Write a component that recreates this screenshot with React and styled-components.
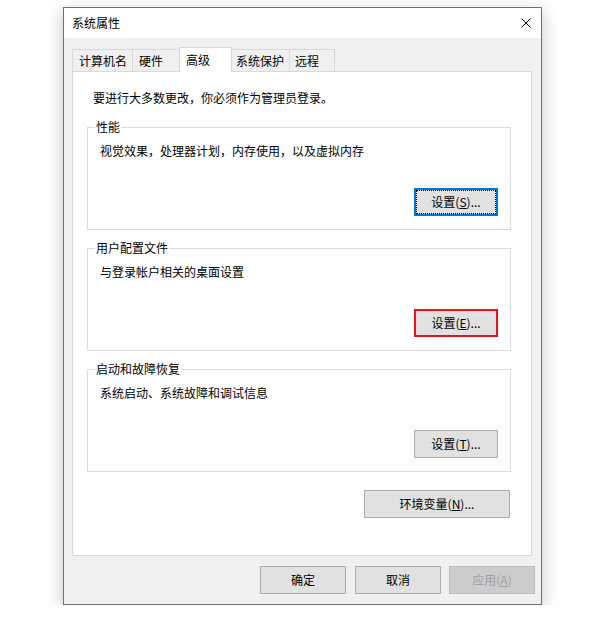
import React from 'react';
import styled, {createGlobalStyle, css} from 'styled-components';

const TABS = [
  {label: '计算机名', width: 61, pad: 6},
  {label: '硬件', width: 48, pad: 6},
  {label: '高级', width: 53, pad: 6, active: true},
  {label: '系统保护', width: 59, pad: 4},
  {label: '远程', width: 46, pad: 5}
];

const GROUPS = [
  {legend: '性能', text: '视觉效果，处理器计划，内存使用，以及虚拟内存', key: 'S', focused: true},
  {legend: '用户配置文件', text: '与登录帐户相关的桌面设置', key: 'E', marked: true},
  {legend: '启动和故障恢复', text: '系统启动、系统故障和调试信息', key: 'T'}
];

const GlobalStyle = createGlobalStyle`
  html, body {
    margin: 0;
    background: #fff;
  }
  body {
    font-family: "Noto Sans CJK SC", "Microsoft YaHei", sans-serif;
    font-size: 12px;
    color: #000;
  }
`;

const Stage = styled.div`
  padding: 7px 0 0 63px;
`;

const Dialog = styled.div`
  box-sizing: border-box;
  width: 479px;
  height: 598px;
  border: 1px solid #707070;
  background: #f0f0f0;
  box-shadow: 0 5px 16px rgba(0, 0, 0, 0.24);
  display: flex;
  flex-direction: column;
`;

const TitleBar = styled.div`
  height: 30px;
  background: #fff;
  display: flex;
  align-items: center;
  justify-content: space-between;
  padding: 0 10px 0 8px;
`;

const Title = styled.span`
  line-height: 16px;
`;

const Body = styled.div`
  flex: 1;
  padding: 9px 6px 10px 8px;
  display: flex;
  flex-direction: column;
`;

const TabStrip = styled.div`
  display: flex;
  align-items: flex-end;
  height: 24px;
`;

const Tab = styled.div`
  box-sizing: border-box;
  width: ${p => p.$width}px;
  height: ${p => (p.$active ? 25 : 22)}px;
  margin-bottom: ${p => (p.$active ? -1 : 0)}px;
  padding: ${p => (p.$active ? 4 : 3)}px 0 0 ${p => p.$pad}px;
  border: 1px solid #d9d9d9;
  border-bottom: none;
  background: ${p => (p.$active ? '#fff' : '#f0f0f0')};
  position: relative;
  z-index: ${p => (p.$active ? 1 : 0)};
  line-height: 16px;
  white-space: nowrap;

  & + & {
    margin-left: -1px;
  }
`;

const Page = styled.div`
  box-sizing: border-box;
  height: 485px;
  margin-right: 3px;
  background: #fff;
  border: 1px solid #d9d9d9;
  padding: 18px 20px 0 14px;
  display: flex;
  flex-direction: column;
`;

const Intro = styled.div`
  margin: 0 0 13px 6px;
  line-height: 16px;
`;

const Group = styled.fieldset`
  margin: 0;
  padding: 8px 12px 13px 7px;
  border: 1px solid #dcdcdc;
  min-width: 0;

  & + & {
    margin-top: 10px;
  }
`;

const Legend = styled.legend`
  padding: 0 1px;
  line-height: 16px;
`;

const GroupText = styled.div`
  margin-left: 5px;
  line-height: 16px;
`;

const Row = styled.div`
  display: flex;
  justify-content: flex-end;
  gap: 8px;
  margin-top: ${p => p.$top}px;
  margin-right: ${p => p.$right || 0}px;
`;

const Button = styled.button`
  box-sizing: border-box;
  width: ${p => p.$width}px;
  height: 28px;
  padding: 0;
  font: inherit;
  font-size: 12px;
  line-height: 16px;
  color: #000;
  background: #e1e1e1;
  border: 1px solid #adadad;
  position: relative;

  ${p => p.$focused && css`
    border: 2px solid #0078d7;

    &::after {
      content: '';
      position: absolute;
      inset: 0;
      border: 1px dotted #000;
    }
  `}

  ${p => p.$marked && css`
    border: 2px solid #f01010;
  `}

  &:disabled {
    background: #cccccc;
    border-color: #bfbfbf;
    color: #a0a0a0;
  }
`;

const Footer = styled(Row)`
  margin-top: 10px;

  & > :first-child {
    margin-right: 1px;
  }
`;

const CloseIcon = () => (
  <svg width="10" height="10" viewBox="0 0 10 10">
    <path d="M0.5 0.5L9.5 9.5M9.5 0.5L0.5 9.5" stroke="#000" strokeWidth="1" fill="none"/>
  </svg>
);

const Label = ({text, hotkey}) => (
  <span>{text}(<u>{hotkey}</u>)</span>
);

export default function App() {
  return (
    <Stage>
      <GlobalStyle/>
      <Dialog>
        <TitleBar>
          <Title>系统属性</Title>
          <CloseIcon/>
        </TitleBar>
        <Body>
          <TabStrip>
            {TABS.map(t => (
              <Tab key={t.label} $width={t.width} $pad={t.pad} $active={t.active}>{t.label}</Tab>
            ))}
          </TabStrip>
          <Page>
            <Intro>要进行大多数更改，你必须作为管理员登录。</Intro>
            {GROUPS.map(g => (
              <Group key={g.legend}>
                <Legend>{g.legend}</Legend>
                <GroupText>{g.text}</GroupText>
                <Row $top={29}>
                  <Button $width={84} $focused={g.focused} $marked={g.marked}>
                    <Label text="设置" hotkey={g.key}/>...
                  </Button>
                </Row>
              </Group>
            ))}
            <Row $top={18} $right={1}>
              <Button $width={146}><Label text="环境变量" hotkey="N"/>...</Button>
            </Row>
          </Page>
          <Footer>
            <Button $width={86}>确定</Button>
            <Button $width={86}>取消</Button>
            <Button $width={86} disabled><Label text="应用" hotkey="A"/></Button>
          </Footer>
        </Body>
      </Dialog>
    </Stage>
  );
}
